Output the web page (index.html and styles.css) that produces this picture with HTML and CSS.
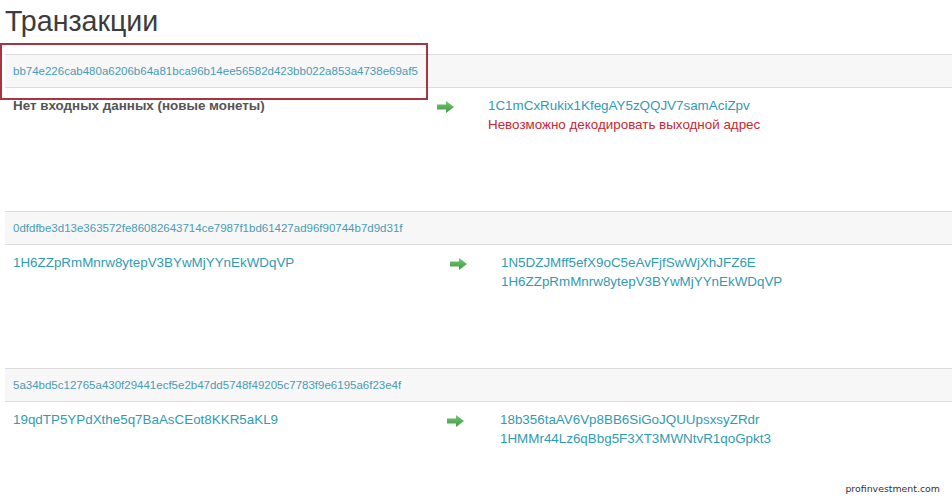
FILE: index.html
```html
<!DOCTYPE html>
<html lang="ru">
<head>
<meta charset="utf-8">
<title>Транзакции</title>
<link rel="stylesheet" href="styles.css">
</head>
<body>
<div class="page">
  <h1 class="title">Транзакции</h1>

  <section class="tx tx-1">
    <div class="tx-hash"><a href="#">bb74e226cab480a6206b64a81bca96b14ee56582d423bb022a853a4738e69af5</a></div>
    <div class="tx-body">
      <div class="tx-in"><span class="coinbase">Нет входных данных (новые монеты)</span></div>
      <div class="tx-arrow"><svg class="arrow" width="17" height="12" viewBox="0 0 17 12"><defs><linearGradient id="g1" x1="0" y1="0" x2="0" y2="1"><stop offset="0" stop-color="#74c874"/><stop offset="1" stop-color="#3e9a3e"/></linearGradient></defs><path d="M0 3.5H9V0L17 6L9 12V8.5H0Z" fill="url(#g1)"/></svg></div>
      <div class="tx-out">
        <a href="#">1C1mCxRukix1KfegAY5zQQJV7samAciZpv</a>
        <span class="error">Невозможно декодировать выходной адрес</span>
      </div>
    </div>
  </section>

  <section class="tx tx-2">
    <div class="tx-hash"><a href="#">0dfdfbe3d13e363572fe86082643714ce7987f1bd61427ad96f90744b7d9d31f</a></div>
    <div class="tx-body">
      <div class="tx-in"><a href="#">1H6ZZpRmMnrw8ytepV3BYwMjYYnEkWDqVP</a></div>
      <div class="tx-arrow"><svg class="arrow" width="17" height="12" viewBox="0 0 17 12"><defs><linearGradient id="g2" x1="0" y1="0" x2="0" y2="1"><stop offset="0" stop-color="#74c874"/><stop offset="1" stop-color="#3e9a3e"/></linearGradient></defs><path d="M0 3.5H9V0L17 6L9 12V8.5H0Z" fill="url(#g2)"/></svg></div>
      <div class="tx-out">
        <a href="#">1N5DZJMff5efX9oC5eAvFjfSwWjXhJFZ6E</a>
        <a href="#">1H6ZZpRmMnrw8ytepV3BYwMjYYnEkWDqVP</a>
      </div>
    </div>
  </section>

  <section class="tx tx-3">
    <div class="tx-hash"><a href="#">5a34bd5c12765a430f29441ecf5e2b47dd5748f49205c7783f9e6195a6f23e4f</a></div>
    <div class="tx-body">
      <div class="tx-in"><a href="#">19qdTP5YPdXthe5q7BaAsCEot8KKR5aKL9</a></div>
      <div class="tx-arrow"><svg class="arrow" width="17" height="12" viewBox="0 0 17 12"><defs><linearGradient id="g3" x1="0" y1="0" x2="0" y2="1"><stop offset="0" stop-color="#74c874"/><stop offset="1" stop-color="#3e9a3e"/></linearGradient></defs><path d="M0 3.5H9V0L17 6L9 12V8.5H0Z" fill="url(#g3)"/></svg></div>
      <div class="tx-out">
        <a href="#">18b356taAV6Vp8BB6SiGoJQUUpsxsyZRdr</a>
        <a href="#">1HMMr44Lz6qBbg5F3XT3MWNtvR1qoGpkt3</a>
      </div>
    </div>
  </section>

  <div class="highlight"></div>
  <div class="watermark">profinvestment.com</div>
</div>
</body>
</html>
```

FILE: styles.css
```css
html, body {
  margin: 0;
  padding: 0;
  background: #ffffff;
}

body {
  font-family: "Liberation Sans", Arial, sans-serif;
  color: #333;
}

.page {
  position: relative;
  width: 952px;
  height: 498px;
  overflow: hidden;
  padding-left: 5px;
  box-sizing: border-box;
}

.title {
  margin: 0;
  padding-top: 4px;
  height: 54px;
  box-sizing: border-box;
  font-size: 28.6px;
  font-weight: normal;
  line-height: 34px;
  color: #3c3c3c;
}

.tx {
  margin-bottom: 71px;
}

.tx-hash {
  height: 34px;
  box-sizing: border-box;
  border-top: 1px solid #dcdcdc;
  border-bottom: 1px solid #dcdcdc;
  background: #f7f7f7;
  padding: 0 8px;
  display: flex;
  align-items: center;
  font-size: 11.5px;
}

.tx-hash a {
  color: #4a9bb6;
  text-decoration: none;
}

.tx-body {
  display: grid;
  height: 52px;
  box-sizing: border-box;
  padding-top: 9px;
  font-size: 13.4px;
  line-height: 18.5px;
}

.tx-1 .tx-body { grid-template-columns: 424px 51px 1fr; }
.tx-2 .tx-body { grid-template-columns: 437px 51px 1fr; }
.tx-3 .tx-body { grid-template-columns: 434px 53px 1fr; }

.tx-in, .tx-arrow, .tx-out {
  padding-left: 8px;
}

.tx-arrow {
  height: 19.5px;
  display: flex;
  align-items: center;
}

.arrow {
  display: block;
}

.tx-out {
  display: flex;
  flex-direction: column;
}

.tx-body a {
  color: #2f9bb4;
  text-decoration: none;
}

.coinbase {
  font-weight: bold;
  color: #555;
}

.error {
  color: #c8282e;
}

.highlight {
  position: absolute;
  left: 0;
  top: 43px;
  width: 428px;
  height: 57px;
  box-sizing: border-box;
  border: 2.5px solid #a8343f;
}

.watermark {
  position: absolute;
  right: 12px;
  bottom: 4px;
  font-family: "DejaVu Sans", Verdana, sans-serif;
  font-size: 9.4px;
  color: #333;
}
```
